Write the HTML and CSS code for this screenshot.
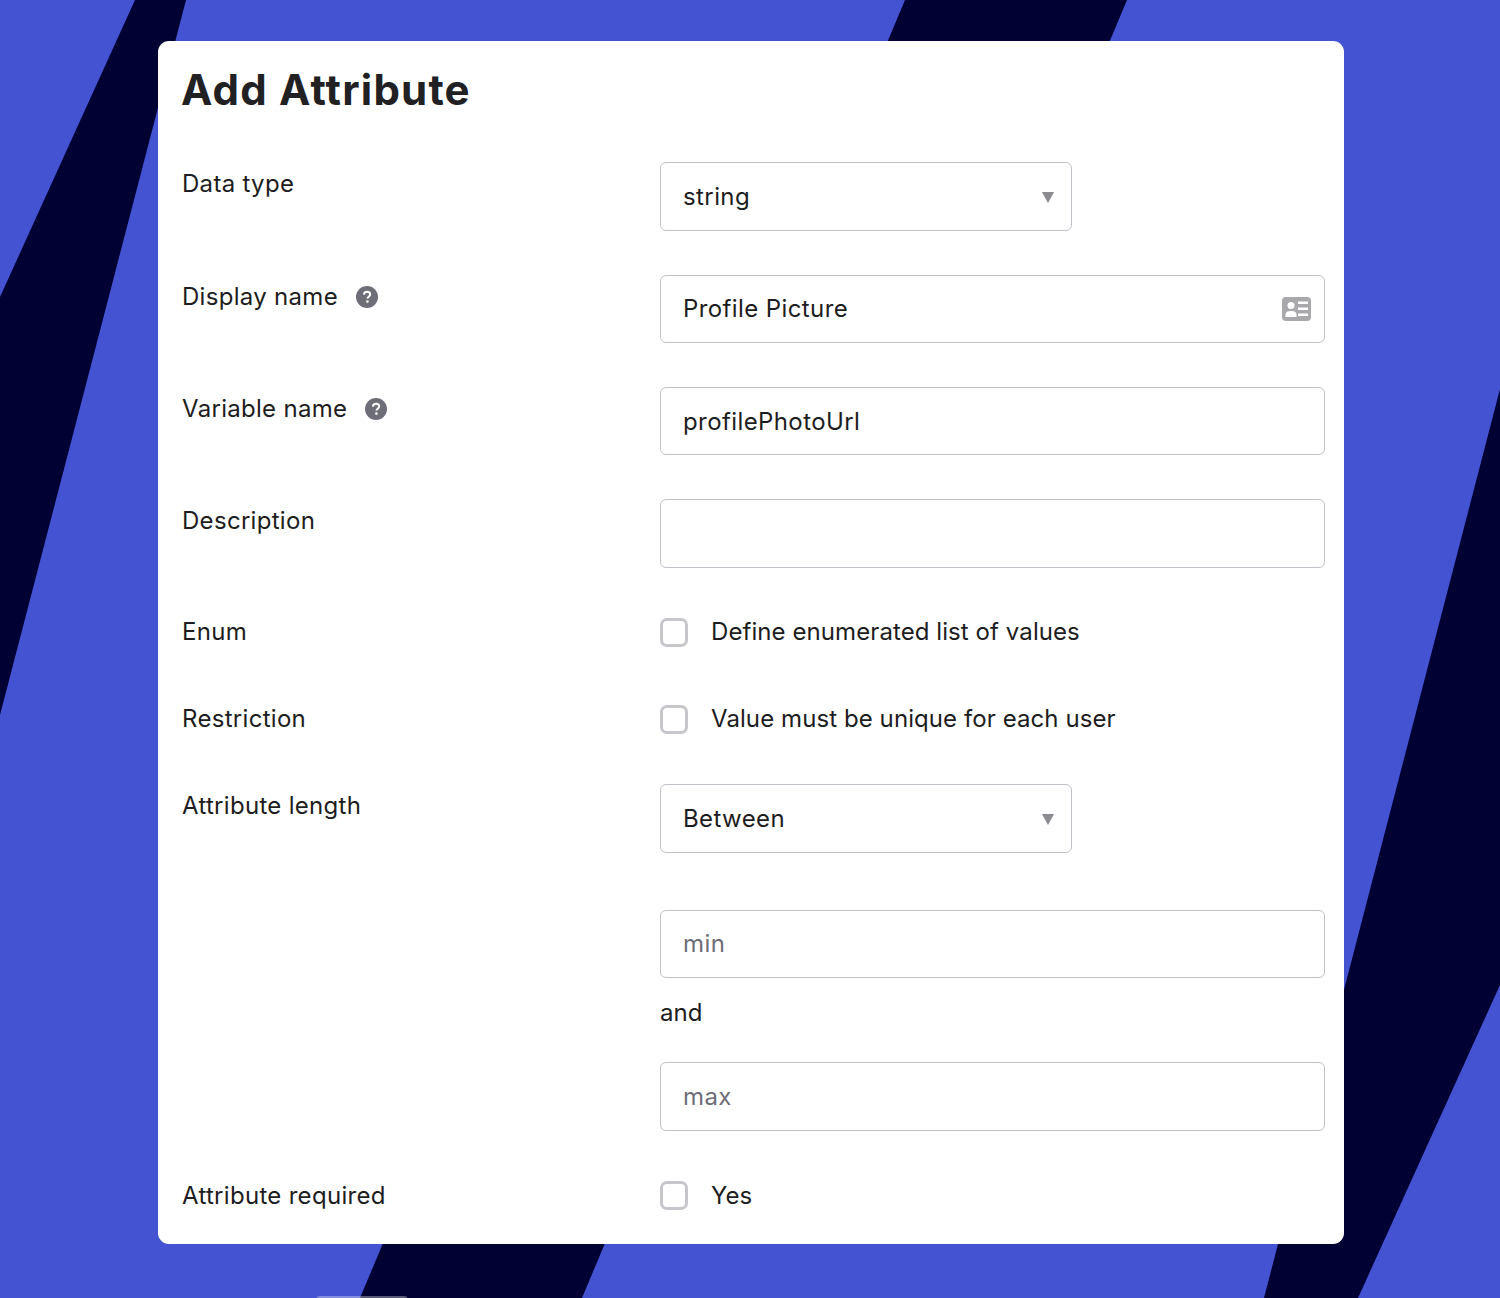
FILE: index.html
```html
<!DOCTYPE html>
<html lang="en">
<head>
<meta charset="utf-8">
<title>Add Attribute</title>
<link rel="stylesheet" href="styles.css">
</head>
<body>
<svg class="backdrop" width="1500" height="1298" viewBox="0 0 1500 1298" aria-hidden="true">
  <polygon class="band" points="135,0 186,0 0,715 0,297"/>
  <polygon class="band" points="905,0 1127,0 582,1298 360,1298"/>
  <polygon class="band" points="1500,389 1500,985 1358,1298 1264,1298"/>
</svg>
<div class="peek"></div>
<main class="card">
  <h1 class="title">Add Attribute</h1>
  <div class="row row-field">
    <div class="label">Data type</div>
    <div class="control">
      <div class="field field-select">string<span class="caret"></span></div>
    </div>
  </div>
  <div class="row row-field">
    <div class="label">Display name
      <svg class="help" width="22" height="22" viewBox="0 0 22 22" aria-hidden="true"><circle cx="11" cy="11" r="11" fill="#6e6e78"/><path d="M7.900 8.600c.1-1.900 1.400-2.900 3.200-2.900 1.800 0 3.100 1 3.100 2.600 0 1.200-.7 1.800-1.500 2.400-.8.6-1.200 1-1.200 1.900" fill="none" stroke="#fff" stroke-width="2"/><circle cx="11.400" cy="15.600" r="1.300" fill="#fff"/></svg>
    </div>
    <div class="control">
      <div class="field">Profile Picture
        <svg class="card-icon" width="29" height="24" viewBox="0 0 29 24" aria-hidden="true"><rect width="29" height="24" rx="4" fill="#a9a9ad"/><circle cx="9" cy="8.500" r="3.500" fill="#fff"/><path d="M3.500 20v-2.500c0-2.500 2-3.500 5.500-3.500s5.500 1 5.500 3.500V20z" fill="#fff"/><rect x="16" y="4.500" width="10" height="2.500" fill="#fff"/><rect x="16" y="10.500" width="10" height="2.500" fill="#fff"/><rect x="16" y="16.500" width="10" height="2.500" fill="#fff"/></svg>
      </div>
    </div>
  </div>
  <div class="row row-field">
    <div class="label">Variable name
      <svg class="help" width="22" height="22" viewBox="0 0 22 22" aria-hidden="true"><circle cx="11" cy="11" r="11" fill="#6e6e78"/><path d="M7.900 8.600c.1-1.900 1.400-2.900 3.200-2.900 1.800 0 3.100 1 3.100 2.600 0 1.200-.7 1.800-1.500 2.400-.8.6-1.200 1-1.200 1.900" fill="none" stroke="#fff" stroke-width="2"/><circle cx="11.400" cy="15.600" r="1.300" fill="#fff"/></svg>
    </div>
    <div class="control"><div class="field">profilePhotoUrl</div></div>
  </div>
  <div class="row row-field row-last">
    <div class="label">Description</div>
    <div class="control"><div class="field"></div></div>
  </div>
  <div class="row row-check row-enum">
    <div class="label">Enum</div>
    <label class="check"><span class="box"></span>Define enumerated list of values</label>
  </div>
  <div class="row row-check row-restrict">
    <div class="label">Restriction</div>
    <label class="check"><span class="box"></span>Value must be unique for each user</label>
  </div>
  <div class="row row-length">
    <div class="label">Attribute length</div>
    <div class="control control-stack">
      <div class="field field-select">Between<span class="caret"></span></div>
      <div class="field field-placeholder field-min">min</div>
      <div class="and">and</div>
      <div class="field field-placeholder">max</div>
    </div>
  </div>
  <div class="row row-check row-required">
    <div class="label">Attribute required</div>
    <label class="check"><span class="box"></span>Yes</label>
  </div>
</main>
</body>
</html>
```
FILE: styles.css
```css
* { box-sizing: border-box; }
html, body { margin: 0; height: 1298px; overflow: hidden; }
body {
  position: relative;
  background: #4353d1;
  padding: 41px 156px 0 158px;
  font-family: Inter, "Noto Sans", sans-serif;
  color: #1d1d21;
  font-size: 24px;
  line-height: 30px;
}
.backdrop { position: absolute; left: 0; top: 0; }
.band { fill: #010134; }
.peek {
  position: absolute;
  left: 316px;
  top: 1296px;
  width: 92px;
  height: 4px;
  border-radius: 4px 4px 0 0;
  background: rgba(255, 255, 255, .35);
}
.card {
  position: relative;
  width: 1186px;
  height: 1203px;
  padding: 0 19px 0 24px;
  background: #fff;
  border-radius: 11px;
}
.title {
  margin: 0 0 0 -1px;
  height: 121.400px;
  padding-top: 24px;
  font-size: 42px;
  line-height: 50px;
  font-weight: 700;
  letter-spacing: 1.200px;
  color: #212124;
}
.row { display: flex; align-items: flex-start; }
.row-field { margin-bottom: 44px; }
.row-last { margin-bottom: 49.500px; }
.label {
  flex: 0 0 478px;
  display: flex;
  align-items: center;
  gap: 18px;
  height: 30px;
  margin-top: 7px;
  letter-spacing: .3px;
}
.control { flex: 1; }
.control-stack { display: flex; flex-direction: column; }
.field {
  position: relative;
  display: flex;
  align-items: center;
  justify-content: space-between;
  height: 68.300px;
  padding: 1px 13px 0 22px;
  border: 1px solid #c1c1c8;
  border-radius: 6px;
  background: #fff;
  letter-spacing: .4px;
}
.field-select { width: 412px; padding-right: 17px; }
.field-placeholder { color: #6e6e78; }
.field-min { margin-top: 57px; }
.and { margin: 20px 0 34.400px; height: 30px; line-height: 30px; }
.caret {
  width: 0;
  height: 0;
  border-left: 6.500px solid transparent;
  border-right: 6.500px solid transparent;
  border-top: 11px solid #8a8a90;
}
.check {
  display: flex;
  align-items: center;
  gap: 23px;
  height: 30px;
  letter-spacing: .08px;
}
.box {
  width: 28px;
  height: 29px;
  border: 3px solid #c6c6cc;
  border-radius: 7px;
}
.row-check .label { margin-top: 0; }
.row-restrict { margin-top: 57px; }
.row-length { margin-top: 50.400px; }
.row-required { margin-top: 50px; }
```
